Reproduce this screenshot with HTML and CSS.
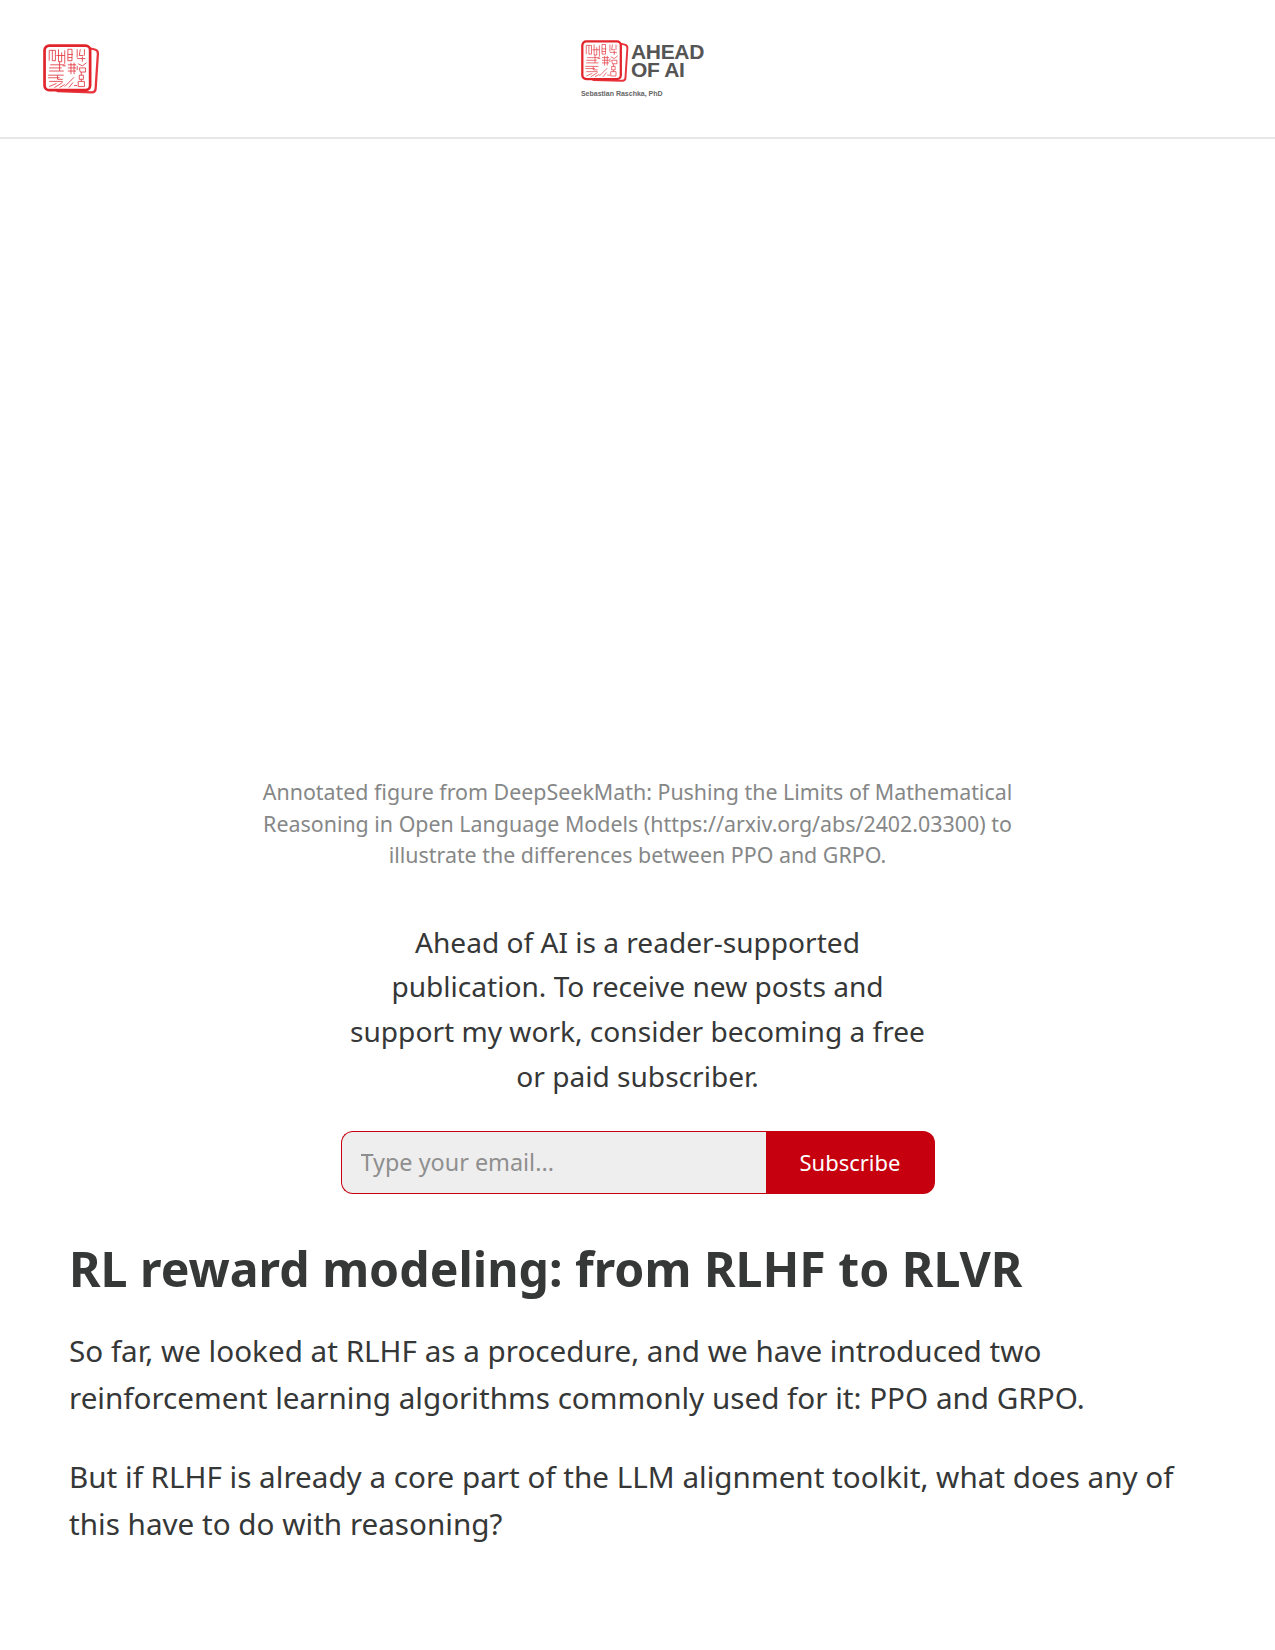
FILE: index.html
```html
<!DOCTYPE html>
<html lang="en">
<head>
    <meta charset="UTF-8">
    <meta name="viewport" content="width=device-width, initial-scale=1.0">
    <title>Ahead of AI</title>
    <link rel="stylesheet" href="styles.css">
</head>
<body>
    <svg class="defs" width="0" height="0" aria-hidden="true">
        <symbol id="seal" viewBox="0 0 56 50">
            <path d="M45 4l5 1.200q3.200 .8 3 4l-2.200 34q-.3 3.500-3.800 3.300L14 45.500" fill="none" stroke="#e8343c" stroke-width="2.200" stroke-linecap="round"/>
            <rect x="1.500" y="1.500" width="44" height="43" rx="4.500" fill="#fff" stroke="#e2252d" stroke-width="2.600"/>
            <path d="M6 6v10M9 6v10h3V6H6M15 5v12h3V8M13 11h8M21 6v13M24 5v11h4V5h-4M24 10h5M24 13h4M33 5v8M36 5l-1 6h4M40 5v6M33 14h8M38 12v5M7 20h14M6 23h12M6 26h10M16 17v9h4M19 21h3M24 20h8M24 23h8M24 26h8M27 18v11M30 18v11M34 19l4 2 4-3M35 23h6v4h-5zM33 21v4M5 30h15M5 32.500h11M14 30v4h5M6 36h13M6 41l7-3M11 42l8-5M16 42l5-3M21 41l9-9M25 42l4-5M30 40h3M35 30h4v4h-4zM34 36h6v5h-6zM37 34v2M37 27v3" fill="none" stroke="#e2343c" stroke-width=".8"/>
        </symbol>
    </svg>
    <header class="topbar">
        <a class="brand-small" href="#" aria-label="Ahead of AI home"><svg class="seal-small"><use href="#seal"/></svg></a>
        <a class="brand" href="#">
            <div class="brand-top">
                <svg class="seal-big"><use href="#seal"/></svg>
                <div class="brand-name">AHEAD<br>OF AI</div>
            </div>
            <div class="brand-author">Sebastian Raschka, PhD</div>
        </a>
    </header>
    <main class="post">
        <figure class="figure">
            <div class="figure-img"></div>
            <figcaption>Annotated figure from DeepSeekMath: Pushing the Limits of Mathematical Reasoning in Open Language Models (https://arxiv.org/abs/2402.03300) to illustrate the differences between PPO and GRPO.</figcaption>
        </figure>
        <div class="subscribe">
            <p class="subscribe-text">Ahead of AI is a reader-supported publication. To receive new posts and support my work, consider becoming a free or paid subscriber.</p>
            <form class="subscribe-form">
                <input class="email" type="email" placeholder="Type your email...">
                <button class="btn" type="button">Subscribe</button>
            </form>
        </div>
        <h2>RL reward modeling: from RLHF to RLVR</h2>
        <p>So far, we looked at RLHF as a procedure, and we have introduced two reinforcement learning algorithms commonly used for it: PPO and GRPO.</p>
        <p>But if RLHF is already a core part of the LLM alignment toolkit, what does any of this have to do with reasoning?</p>
    </main>
</body>
</html>
```

FILE: styles.css
```css
* {
    margin: 0;
    padding: 0;
    box-sizing: border-box;
}
body {
    font-family: 'Noto Sans', sans-serif;
    background: white;
    color: #363737;
    height: 1650px;
    overflow: hidden;
}
.defs {
    position: absolute;
}
.topbar {
    height: 139px;
    border-bottom: 2px solid #e6e6e6;
    display: flex;
    align-items: center;
    justify-content: center;
    position: relative;
}
.brand-small {
    position: absolute;
    left: 43px;
    top: 44px;
}
.seal-small {
    display: block;
    width: 58px;
    height: 52px;
}
.brand {
    display: block;
    color: #555;
    text-decoration: none;
    margin-bottom: 1px;
    margin-left: 10px;
}
.brand-top {
    display: flex;
    align-items: center;
    gap: 1px;
}
.seal-big {
    display: block;
    width: 49px;
    height: 44px;
}
.brand-name {
    font-family: 'Liberation Sans', sans-serif;
    font-weight: bold;
    font-size: 21px;
    line-height: 18px;
    letter-spacing: -0.3px;
    margin-bottom: 2px;
}
.brand-author {
    font-family: 'Liberation Sans', sans-serif;
    font-weight: bold;
    font-size: 7px;
    margin-top: 6px;
    color: #666;
}
.post {
    padding: 0 69px;
}
.figure-img {
    height: 637px;
}
figcaption {
    width: 790px;
    margin: 0 auto;
    font-size: 21.400px;
    line-height: 31.500px;
    text-align: center;
    color: #868787;
}
.subscribe {
    margin-top: 49px;
}
.subscribe-text {
    width: 600px;
    margin: 0 auto;
    font-size: 28.100px;
    line-height: 44.800px;
    text-align: center;
    color: #363737;
}
.subscribe-form {
    display: flex;
    width: 594px;
    height: 63px;
    margin: 32px auto 0;
}
.email {
    flex: 1;
    min-width: 0;
    padding: 0 19px;
    background: #eee;
    border: 1.500px solid #c6000e;
    border-right: none;
    border-radius: 12px 0 0 12px;
    font-family: inherit;
    font-size: 23.400px;
}
.email::placeholder {
    color: #8f8f8f;
}
.btn {
    width: 169px;
    background: #c6000e;
    color: white;
    border: none;
    border-radius: 0 12px 12px 0;
    font-family: inherit;
    font-size: 22px;
}
h2 {
    margin-top: 44px;
    font-size: 48.200px;
    line-height: 60px;
    font-weight: bold;
    color: #363737;
}
.post > p {
    margin-top: 32px;
    font-size: 29.650px;
    line-height: 47px;
    color: #363737;
}
.post > h2 + p {
    margin-top: 29px;
}
```
